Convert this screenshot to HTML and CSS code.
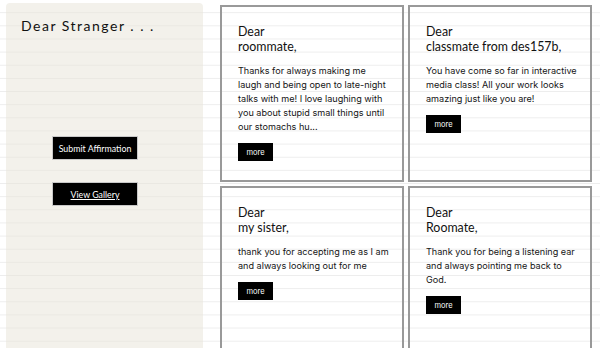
FILE: index.html
```html
<!DOCTYPE html>
<html lang="en">
<head>
  <meta charset="UTF-8" />
  <meta name="viewport" content="width=device-width, initial-scale=1.0" />
  <title>Dear Stranger</title>
  <link rel="stylesheet" href="styles.css">
</head>
<body>
<div class="page">
  <!-- left panel -->
  <div class="sidebar">
    <h1>Dear Stranger . . .</h1>
    <div class="actions">
      <button class="btn">Submit Affirmation</button>
      <button class="btn"><a href="#">View Gallery</a></button>
    </div>
  </div>

  <!-- letters -->
  <div class="letters">
    <div class="letter">
      <h2>Dear<br>roommate,</h2>
      <p>Thanks for always making me laugh and being open to late-night talks with me! I love laughing with you about stupid small things until our stomachs hu...</p>
      <button class="more">more</button>
    </div>
    <div class="letter">
      <h2>Dear<br>classmate from des157b,</h2>
      <p>You have come so far in interactive media class! All your work looks amazing just like you are!</p>
      <button class="more">more</button>
    </div>
    <div class="letter">
      <h2>Dear<br>my sister,</h2>
      <p>thank you for accepting me as I am and always looking out for me</p>
      <button class="more">more</button>
    </div>
    <div class="letter">
      <h2>Dear<br>Roomate,</h2>
      <p>Thank you for being a listening ear and always pointing me back to God.</p>
      <button class="more">more</button>
    </div>
  </div>
</div>
</body>
</html>
```

FILE: styles.css
```css
html, body {
  height: 100%;
}

body {
  margin: 0;
  overflow: hidden;
  background-color: #ffffff;
  background-image: linear-gradient(transparent 12px, #ededed 12px, #ededed 13.15px);
  background-size: 100% 13.15px;
  font-family: 'Inter', sans-serif;
  color: #151515;
}

.page {
  display: flex;
  align-items: flex-start;
  padding-left: 6px;
}

.sidebar {
  width: 197px;
  height: 360px;
  margin-top: 3px;
  border-radius: 4px 4px 0 0;
  background: rgba(232, 228, 216, 0.5);
}

.sidebar h1 {
  margin: 14px 0 0 15px;
  font-family: 'Lato', sans-serif;
  font-weight: 400;
  font-size: 14px;
  letter-spacing: 1.5px;
  color: #111;
}

.actions {
  display: flex;
  flex-direction: column;
  gap: 22px;
  margin: 102px 0 0 46px;
}

.btn {
  width: 86px;
  height: 24px;
  padding: 0;
  background: #000;
  color: #fff;
  border: 1px solid #c8c8c8;
  font-family: 'Lato', sans-serif;
  font-size: 8.8px;
  cursor: pointer;
}

.btn a,
.btn a:visited {
  color: #fff;
}

.letters {
  display: grid;
  grid-template-columns: 184px 184px;
  grid-auto-rows: 177px;
  gap: 4px;
  margin: 5px 0 0 17px;
}

.letter {
  box-sizing: border-box;
  border: 2px solid #999;
  padding: 17px 10px 17px 16px;
}

.letter h2 {
  margin: 0;
  font-family: 'Lato', sans-serif;
  font-weight: 400;
  font-size: 12.4px;
  line-height: 15px;
  color: #111;
}

.letter p {
  margin: 10px 0 9px;
  font-size: 9.1px;
  line-height: 14px;
}

.more {
  display: block;
  width: 35px;
  height: 18px;
  padding: 0;
  background: #000;
  color: #fff;
  border: none;
  font-family: 'Inter', sans-serif;
  font-size: 7.5px;
  cursor: pointer;
}
```
